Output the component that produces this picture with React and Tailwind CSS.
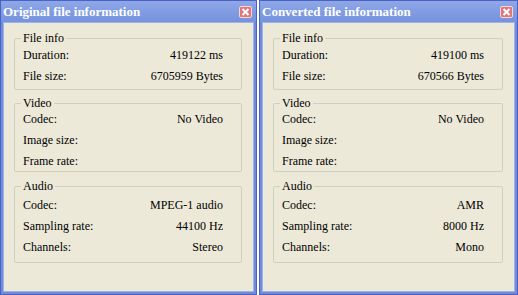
import React from "react";

function CloseBtn() {
  return (
    <div className="w-[13px] h-[12px] bg-[#e0787a] border border-[#f4d4d4] rounded-[2px] flex items-center justify-center">
      <svg width="9" height="8" viewBox="0 0 9 8">
        <path d="M1.5 1 L7.5 7 M7.5 1 L1.5 7" stroke="#ffffff" strokeWidth="2" />
      </svg>
    </div>
  );
}

function Row({ label, value }) {
  return (
    <div className="h-[21px] flex items-center justify-between pl-[8px] pr-[18px] text-[12px] text-black leading-none">
      <span>{label}</span>
      <span>{value}</span>
    </div>
  );
}

function Group({ title, rows, cls }) {
  return (
    <div className={"relative border border-[#d0d0bf] rounded-[2px] " + cls}>
      <span className="absolute left-[6px] top-[-8px] px-[2px] bg-[#ece9d8] text-[12px] leading-[14px] text-black">
        {title}
      </span>
      {rows.map((r) => (
        <Row key={r[0]} label={r[0]} value={r[1]} />
      ))}
    </div>
  );
}

function Win({ title, data, cls }) {
  return (
    <div className={"h-[295px] flex flex-col bg-[#6f8bdb] border border-[#4b61c6] font-['Liberation_Serif','Times_New_Roman',serif] " + cls}>
      <div className="h-[21px] flex items-center justify-between pl-[2px] pr-[4px] bg-gradient-to-b from-[#8ea7e7] to-[#7592dd]">
        <span className="text-[13px] font-bold text-white leading-none">{title}</span>
        <CloseBtn />
      </div>
      <div className="flex-1 mx-[2px] mb-[2px] bg-[#ece9d8] border border-[#9fb3ea] flex flex-col pl-[10px] pr-[11px]">
        <Group cls="mt-[15px] h-[52px] pt-[5px]" title="File info" rows={[["Duration:", data.dur], ["File size:", data.size]]} />
        <Group cls="mt-[13px] h-[69px] pt-[4px]" title="Video" rows={[["Codec:", "No Video"], ["Image size:", ""], ["Frame rate:", ""]]} />
        <Group cls="mt-[14px] h-[77px] pt-[7px]" title="Audio" rows={[["Codec:", data.codec], ["Sampling rate:", data.rate], ["Channels:", data.ch]]} />
      </div>
    </div>
  );
}

export default function App() {
  return (
    <div className="w-[518px] h-[295px] flex bg-white overflow-hidden">
      <Win
        cls="w-[257px]"
        title="Original file information"
        data={{ dur: "419122 ms", size: "6705959 Bytes", codec: "MPEG-1 audio", rate: "44100 Hz", ch: "Stereo" }}
      />
      <div className="w-[2px] bg-white" />
      <Win
        cls="w-[259px]"
        title="Converted file information"
        data={{ dur: "419100 ms", size: "670566 Bytes", codec: "AMR", rate: "8000 Hz", ch: "Mono" }}
      />
    </div>
  );
}
